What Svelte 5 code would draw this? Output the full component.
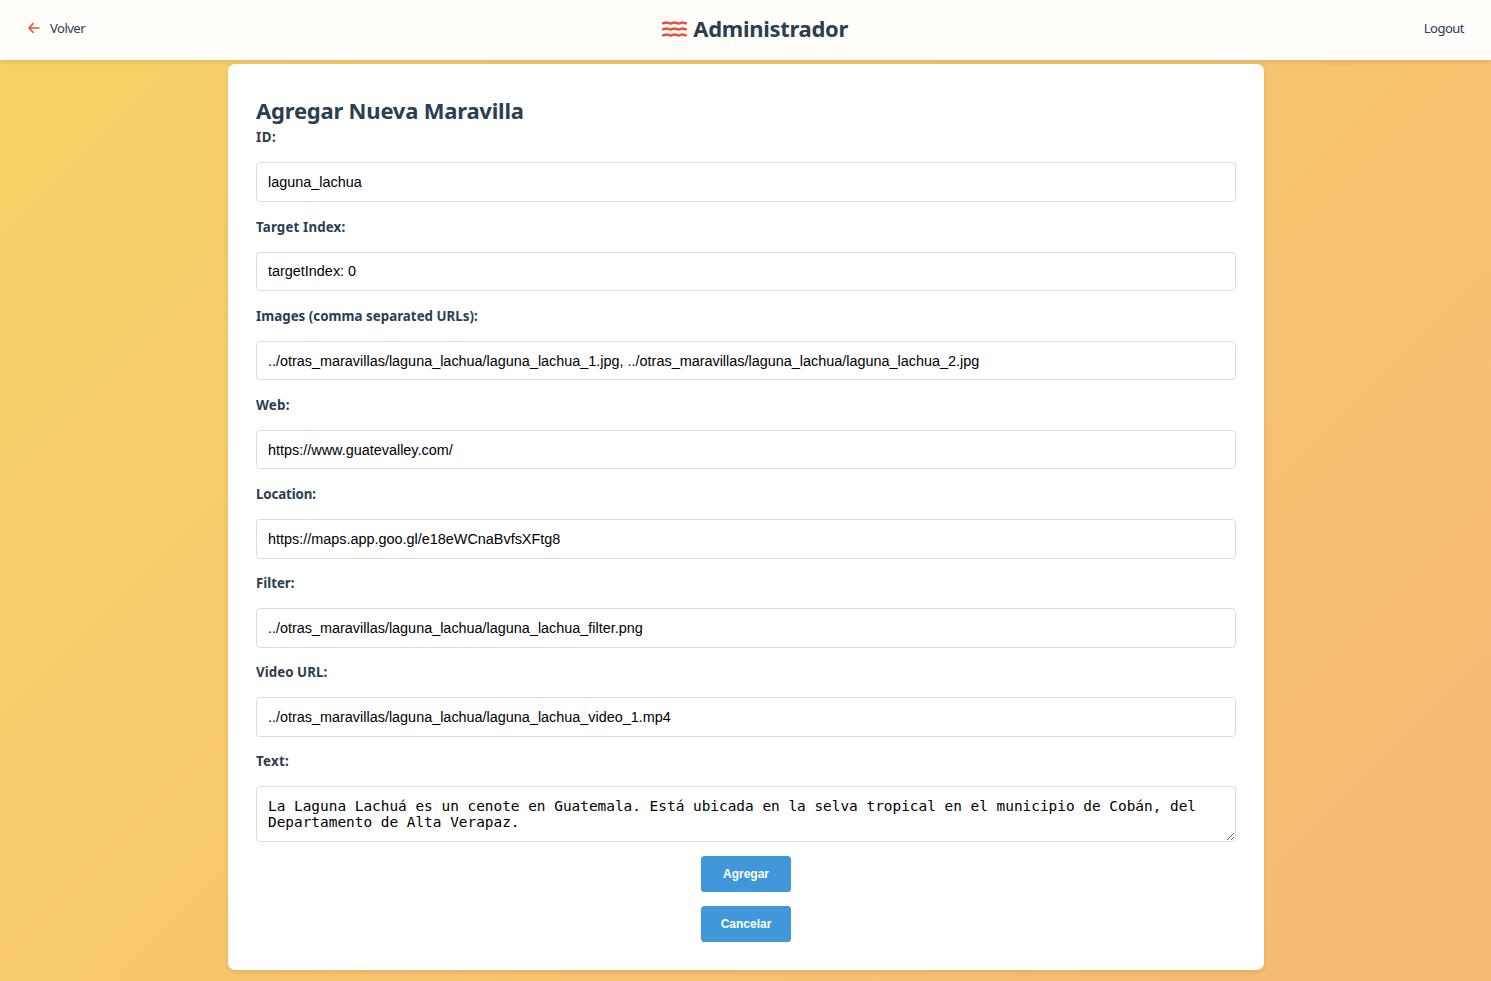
<script>
  const fields = [
    { id: 'id', label: 'ID:', tracking: 0.6, value: 'laguna_lachua' },
    { id: 'target', label: 'Target Index:', tracking: 0.16, value: 'targetIndex: 0' },
    { id: 'images', label: 'Images (comma separated URLs):', tracking: 0.03, value: '../otras_maravillas/laguna_lachua/laguna_lachua_1.jpg, ../otras_maravillas/laguna_lachua/laguna_lachua_2.jpg' },
    { id: 'web', label: 'Web:', tracking: 0.25, value: 'https://www.guatevalley.com/' },
    { id: 'location', label: 'Location:', tracking: -0.12, value: 'https://maps.app.goo.gl/e18eWCnaBvfsXFtg8' },
    { id: 'filter', label: 'Filter:', tracking: -0.02, value: '../otras_maravillas/laguna_lachua/laguna_lachua_filter.png' },
    { id: 'video', label: 'Video URL:', tracking: 0.06, value: '../otras_maravillas/laguna_lachua/laguna_lachua_video_1.mp4' }
  ];
  const text = 'La Laguna Lachuá es un cenote en Guatemala. Está ubicada en la selva tropical en el municipio de Cobán, del Departamento de Alta Verapaz.';
</script>

<div class="page">
  <header>
    <a class="back" href="#volver">
      <svg width="12" height="12" viewBox="0 0 12 12"><path d="M11 6H1.2M5.1 1.7L1 6L5.1 10.3" /></svg>
      <span>Volver</span>
    </a>
    <div class="brand">
      <svg width="25" height="18" viewBox="0 0 25 18">
        {#each [3, 9, 15] as y}
          <path d="M1.2 {y + .3}C2.8 {y + .3} 3 {y - .6} 4.6 {y - .6}S7 {y + .6} 8.6 {y + .6}S11 {y - .6} 12.5 {y - .6}S14.8 {y + .6} 16.4 {y + .6}S18.8 {y - .6} 20.4 {y - .6}S22.2 {y + .3} 23.8 {y + .3}" />
        {/each}
      </svg>
      <h1>Administrador</h1>
    </div>
    <a class="logout" href="#logout">Logout</a>
  </header>

  <main>
    <h2>Agregar Nueva Maravilla</h2>
    <form>
      {#each fields as f}
        <label for={f.id} style:letter-spacing="{f.tracking}px">{f.label}</label>
        <input id={f.id} value={f.value} />
      {/each}
      <label for="text" style:letter-spacing="0.3px">Text:</label>
      <textarea id="text" value={text}></textarea>
      <button type="button">Agregar</button>
      <button type="button">Cancelar</button>
    </form>
  </main>
</div>

<style>
  :global(body) { margin: 0; }
  .page {
    box-sizing: border-box;
    height: 981px;
    overflow: hidden;
    background: linear-gradient(135deg, #f6d365 0%, #f7c66e 50%, #f6b975 100%);
    font-family: "Noto Sans", sans-serif;
    color: #2c3e50;
  }
  header {
    box-sizing: border-box;
    display: flex;
    justify-content: space-between;
    align-items: center;
    height: 60px;
    padding: 0 27px 3px;
    background: #fffdf9;
    box-shadow: 0 2px 5px rgba(0, 0, 0, .1);
  }
  a { color: inherit; text-decoration: none; font-size: 13.1px; line-height: 18px; letter-spacing: -.56px; }
  .back { display: flex; align-items: center; gap: 11px; }
  .back span, .logout { margin-top: -1px; }
  svg { display: block; fill: none; stroke: #e74c3c; }
  .back svg { margin: -1px -.5px 0 .5px; stroke-width: 1.6; stroke-linecap: round; stroke-linejoin: round; }
  .brand { display: flex; align-items: center; gap: 6.5px; }
  .brand svg { margin-top: 1px; stroke-width: 2.5; stroke-linecap: round; }
  h1, h2 { margin: 0; padding-bottom: 2px; font-size: 22px; font-weight: 700; line-height: 28px; letter-spacing: -.21px; }
  h1 { margin-right: -1px; letter-spacing: -.3px; }
  main {
    box-sizing: border-box;
    width: 1036px;
    height: 906px;
    margin: 4px 227px 0 228px;
    padding: 32px 28px 0;
    background: #fff;
    border-radius: 7px;
    box-shadow: 0 2px 5px rgba(0, 0, 0, .1);
  }
  form { display: flex; flex-direction: column; margin-top: 1.46px; }
  label { height: 20px; margin-bottom: 15px; font-size: 13.3px; font-weight: 700; line-height: 20px; }
  input, textarea {
    box-sizing: border-box;
    width: 100%;
    margin: 0 0 14.5px;
    padding: 10.8px 11px;
    border: 1px solid #ddd;
    border-radius: 3.6px;
    background: #fff;
    color: #000;
    font-size: 14.41px;
    outline: none;
  }
  input { height: 39.63px; font-family: "Liberation Sans", Arial, sans-serif; }
  textarea { height: 56px; margin-bottom: 14px; font-family: "DejaVu Sans Mono", monospace; line-height: 16px; resize: vertical; overflow: hidden; }
  button {
    align-self: center;
    width: 90px;
    height: 36px;
    margin: 0 0 14px;
    padding: 0;
    border: 0;
    border-radius: 3.6px;
    background: #4098db;
    color: #fff;
    font: 700 12px "Liberation Sans", Arial, sans-serif;
  }
</style>
